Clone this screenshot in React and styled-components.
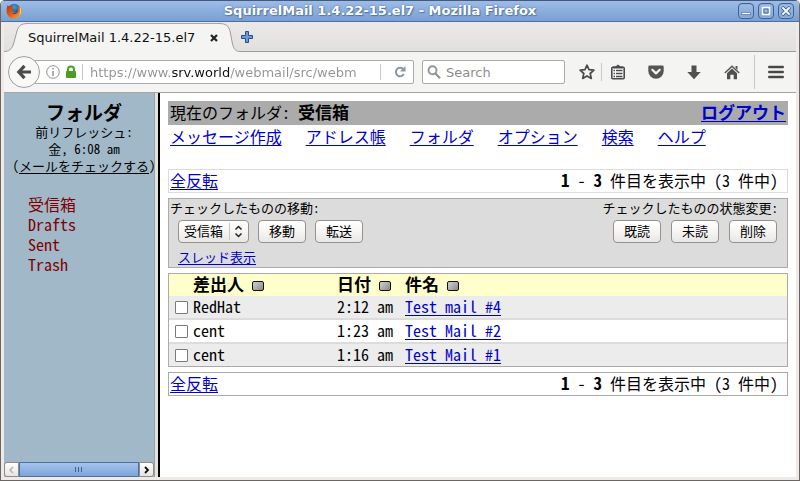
import React from "react";
import styled, { createGlobalStyle } from "styled-components";

const GlobalStyle = createGlobalStyle`
  *, *::before, *::after { box-sizing: border-box; }
  body { margin: 0; background: #fff; }
  button, input, select { font: inherit; color: inherit; margin: 0; }
`;

const chromeFont = `"DejaVu Sans", sans-serif`;
const pageFont = `"Noto Sans CJK JP", sans-serif`;

/* ---------- window frame ---------- */

const Frame = styled.div`
  display: flex;
  flex-direction: column;
  min-height: 100vh;
  background: #edeae8;
  border: 1px solid #6b6663;
  border-top: 0;
  border-radius: 5px 5px 0 0;
  overflow: hidden;
  font: 13px/16px ${chromeFont};
`;

const TitleBar = styled.header`
  display: grid;
  grid-template-columns: 24px 1fr 64px;
  align-items: center;
  height: 22px;
  padding: 0 5px;
  border-top: 1px solid #45597a;
  border-bottom: 1px solid #49709f;
  background: linear-gradient(#9dbce8, #7a9fd3);
`;

const WindowTitle = styled.h1`
  margin: 0;
  font-size: 13px;
  line-height: 20px;
  text-align: center;
  white-space: nowrap;
  color: #fff;
  text-shadow: 0 0 2px #45699c, 1px 1px 1px #5479ad;
`;

const WindowControls = styled.div`
  display: flex;
  justify-content: flex-end;
  gap: 4px;
`;

const WindowButton = styled.button`
  display: grid;
  place-items: center;
  width: 16px;
  height: 16px;
  padding: 0;
  border: 1px solid #41628f;
  border-radius: 4px;
  background: linear-gradient(#9dbce8, #7fa4d7);
  box-shadow: inset 0 0 0 1px #8fb1e0;
`;

const Body = styled.div`
  display: flex;
  flex: 1;
  flex-direction: column;
  margin: 0 3px 3px;
`;

/* ---------- tabs ---------- */

const TabStrip = styled.nav`
  display: flex;
  height: 30px;
  background: linear-gradient(#ebe9e8, #e2e0df);
`;

const Tab = styled.div`
  display: flex;
  align-items: center;
  gap: 14px;
  margin-top: 1px;
  padding: 0 0 1px;
  background: #f4f4f2;
  border-top: 1px solid #a3a6a8;
  color: #111;
  white-space: nowrap;
`;

const TabRest = styled.div`
  flex: 1;
  display: flex;
  align-items: center;
  border-bottom: 1px solid #9c9b99;
`;

const IconButton = styled.button`
  display: grid;
  place-items: center;
  flex: none;
  width: ${(p) => p.$width || 16}px;
  height: 16px;
  padding: 0;
  border: 0;
  background: none;
`;

/* ---------- toolbar ---------- */

const Toolbar = styled.div`
  display: flex;
  align-items: center;
  height: 41px;
  padding-left: 4px;
  background: #f4f4f2;
  border-bottom: 1px solid #a5a4a2;
`;

const BackButton = styled.button`
  display: grid;
  place-items: center;
  flex: none;
  z-index: 1;
  width: 32px;
  height: 32px;
  padding: 0;
  border: 1px solid #a09f9d;
  border-radius: 50%;
  background: #f8f8f7;
`;

const Field = styled.div`
  display: flex;
  align-items: center;
  height: 24px;
  border: 1px solid #acaba8;
  border-radius: 2px;
  background: #fff;
`;

const UrlField = styled(Field)`
  flex: 1;
  min-width: 0;
  margin-left: -6px;
  padding-left: 11px;
  gap: 5px;
`;

const SearchField = styled(Field)`
  width: 143px;
  margin-left: 8px;
  padding-left: 4px;
  gap: 5px;
`;

const TextInput = styled.input`
  flex: 1;
  min-width: 0;
  height: 20px;
  padding: 0;
  border: 0;
  outline: 0;
  background: none;
  color: #111;
  &::placeholder { color: #8c8c8c; opacity: 1; }
`;

const UrlInput = styled(TextInput)`
  padding-left: 2px;
  background: linear-gradient(to right, #929292 83px, #111 83px 142px, #929292 142px);
  -webkit-background-clip: text;
  background-clip: text;
  -webkit-text-fill-color: transparent;
`;

const Rule = styled.span`
  flex: none;
  width: 1px;
  height: ${(p) => p.$height}px;
  background: #c9c8c6;
`;

const Tools = styled.div`
  display: flex;
  align-items: center;
  margin-left: 8px;
`;

/* ---------- frames ---------- */

const Frames = styled.div`
  display: flex;
  flex: 1;
  font-family: ${pageFont};
  font-size: 16px;
  color: #000;
  font-feature-settings: "hwid";
`;

const Sidebar = styled.aside`
  display: flex;
  flex-direction: column;
  flex: none;
  width: 150px;
  overflow: hidden;
  background: #a1b8c8;
`;

const SidebarBody = styled.div`
  flex: 1;
  width: 160px;
  padding: 8px;
`;

const SidebarTitle = styled.h2`
  margin: 0;
  font-size: 19px;
  line-height: 22px;
  text-align: center;
`;

const Refresh = styled.p`
  margin: 0;
  font-size: 13px;
  line-height: 17px;
  text-align: center;
  white-space: nowrap;
`;

const FolderList = styled.ul`
  margin: 20px 0 0;
  padding: 0 0 0 16px;
  list-style: none;
  line-height: 20px;
`;

const FolderLink = styled.a`
  display: block;
  color: #800000;
  text-decoration: none;
`;

const Splitter = styled.div`
  flex: none;
  width: 6px;
  border-left: 1px solid #a09f9d;
  border-right: 2px solid #000;
  background: #e4e2e0;
`;

const ScrollBar = styled.div`
  display: flex;
  height: 15px;
  border-radius: 3px;
`;

const ScrollButton = styled.button`
  display: grid;
  place-items: center;
  width: 15px;
  padding: 0;
  border: 1px solid #8f8b88;
  border-radius: ${(p) => (p.$end ? "0 3px 3px 0" : "3px 0 0 3px")};
  background: linear-gradient(#fff, #e6e4e2);
`;

const ScrollThumb = styled.div`
  display: grid;
  place-items: center;
  flex: 1;
  border: 1px solid #4a719f;
  background: linear-gradient(#a4c3ee, #7ea5d8);
`;

const Link = styled.a`
  color: ${(p) => p.$color || "#0000cc"};
  text-decoration: underline;
  text-decoration-thickness: 1px;
  text-underline-offset: 2px;
  text-decoration-skip-ink: none;
`;

const Strong = styled.b`
  font-size: 17px;
`;

const Main = styled.main`
  flex: 1;
  min-width: 0;
  padding: 8px;
  background: #fff;
`;

const FolderBar = styled.div`
  display: flex;
  justify-content: space-between;
  padding: 0 2px 2px;
  line-height: 22px;
  background: #ababab;
`;

const Menu = styled.nav`
  display: flex;
  flex-wrap: wrap;
  gap: 0 24px;
  margin-bottom: 22px;
  padding: 0 2px;
  line-height: 22px;
`;

const CountBar = styled.div`
  display: flex;
  justify-content: space-between;
  padding: 0 9px 2px 1px;
  line-height: 20px;
  border: 1px solid ${(p) => p.$line};
`;

const Actions = styled.section`
  display: flex;
  justify-content: space-between;
  margin: 5px 0;
  padding: 0 9px 1px 1px;
  border: 1px solid #ababab;
  background: #dcdcdc;
  font-size: 13px;
`;

const ActionGroup = styled.div`
  display: flex;
  flex-direction: column;
  align-items: ${(p) => (p.$right ? "flex-end" : "flex-start")};
  line-height: 18px;
`;

const ButtonRow = styled.div`
  display: flex;
  gap: ${(p) => p.$gap}px;
  margin: 3px 0 5px;
  padding: ${(p) => (p.$right ? "0 1px 0 0" : "0 0 0 8px")};
`;

const Indent = styled.div`
  padding-left: 8px;
`;

const controlLook = `
  height: 23px;
  border: 1px solid #96918d;
  border-radius: 4px;
  background: linear-gradient(#fff, #f6f5f4 50%, #e9e7e5);
  font-size: 13px;
  line-height: 18px;
`;

const Button = styled.button`
  ${controlLook}
  width: 48px;
  padding: 0 0 2px;
`;

const SelectBox = styled.div`
  ${controlLook}
  display: grid;
  grid-template-columns: 50px 20px;
  align-items: center;
  width: 71px;
`;

const Select = styled.select`
  grid-area: 1 / 1 / 2 / 3;
  height: 21px;
  padding: 0 0 2px 5px;
  border: 0;
  appearance: none;
  background: none;
`;

const SelectArrows = styled.svg`
  grid-area: 1 / 2 / 2 / 3;
  pointer-events: none;
`;

const MessageTable = styled.table`
  width: 100%;
  margin-bottom: 5px;
  border: 1px solid #ababab;
  border-spacing: 0;
  table-layout: fixed;
  line-height: 20px;
  text-align: left;
  white-space: nowrap;
`;

const Column = styled.col`
  width: ${(p) => p.$width};
`;

const HeadCell = styled.th`
  padding: 0 0 2px;
  font-size: 17px;
  background: #ffffcc;
`;

const SortButton = styled.button`
  width: 12px;
  height: 10px;
  margin-left: 8px;
  padding: 0;
  border: 1px solid #111;
  border-radius: 2px;
  background: linear-gradient(135deg, #d2d2d2, #8a8a8a);
  vertical-align: 1px;
`;

const MessageRow = styled.tr`
  background: ${(p) => (p.$shade ? "#ececec" : "#fff")};
  &:not(:last-child) > td { border-bottom: 2px solid #dcdcdc; }
`;

const Cell = styled.td`
  padding: 0 0 2px;
`;

const CheckCell = styled.td`
  padding: 0 0 0 6px;
`;

const Check = styled.input`
  display: block;
  appearance: none;
  width: 13px;
  height: 13px;
  border: 1px solid #7d7976;
  border-radius: 1px;
  background: #fff;
`;

const folders = ["受信箱", "Drafts", "Sent", "Trash"];
const menu = ["メッセージ作成", "アドレス帳", "フォルダ", "オプション", "検索", "ヘルプ"];
const messages = [
  { from: "RedHat", time: "2:12 am", subject: "Test mail #4" },
  { from: "cent", time: "1:23 am", subject: "Test Mail #2" },
  { from: "cent", time: "1:16 am", subject: "Test Mail #1" },
];

/* ---------- icons ---------- */

const FirefoxLogo = () => (
  <svg width="16" height="16" viewBox="0 0 16 16" aria-hidden="true">
    <defs>
      <radialGradient id="globe" cx="50%" cy="25%" r="75%">
        <stop offset="0" stopColor="#3f9fd8" />
        <stop offset="1" stopColor="#122a66" />
      </radialGradient>
      <linearGradient id="fox" x1="0" y1="0" x2="1" y2="1">
        <stop offset="0" stopColor="#b5330e" />
        <stop offset=".5" stopColor="#e2601a" />
        <stop offset="1" stopColor="#f9b233" />
      </linearGradient>
    </defs>
    <circle cx="8.2" cy="7.2" r="6.4" fill="url(#globe)" />
    <path d="M1.8 2C2.200 2.900 2.800 3.200 3.600 3.200c1.200-.6 2-.4 2.800.2-.5.7.2 1.300 1.400 1.500-.2.900-1.600 1.200-1.900 2 .2 1.700 2 2.400 3.600 1.700-.6 1.400-2.200 2.100-3.600 1.600 2 1.800 5.500.8 6.200-2.100.4-2-.2-3.700-1.300-5 2.100.6 3 1.900 3.400 3 0-1-.3-1.900-.7-2.600C15.200 5 15.900 6.600 15.600 8.800c-.5 3.900-3.800 6.700-7.700 6.700C3.700 15.500.6 12.200.6 8.200.6 5.700 1 3.600 1.800 2z" fill="url(#fox)" />
    <path d="M13.500 3.200c2.200 2.600 2.400 6.800-.2 9.300 1-2.800 1.200-6 .2-9.300z" fill="#fde06a" />
  </svg>
);

const TabEdge = ({ right }) => {
  const curve = right
    ? "M0 1.500C7 1.500 9.500 4 11 9L13.500 22C15 27.500 17 29.500 21 29.500"
    : "M0 29.500C5 29.500 7.500 27.500 9.500 22L13 9C14.500 4 17 1.500 24 1.500";
  const width = right ? 21 : 24;
  return (
    <svg width={width} height="30" viewBox={`0 0 ${width} 30`} aria-hidden="true">
      <path d={right ? `${curve}V30H0z` : `${curve}V30H0z`} fill="#f4f4f2" />
      <path d={curve} fill="none" stroke="#9c9b99" />
    </svg>
  );
};

const PlusIcon = () => (
  <svg width="12" height="12" viewBox="0 0 12 12" aria-hidden="true">
    <path d="M4.500.5h3v4h4v3h-4v4h-3v-4h-4v-3h4z" fill="#6b9bd2" stroke="#264f86" strokeLinejoin="round" />
  </svg>
);

const CloseIcon = () => (
  <svg width="8" height="8" viewBox="0 0 8 8" aria-hidden="true">
    <path d="M1 1l6 6M7 1L1 7" stroke="#222" strokeWidth="2.200" />
  </svg>
);

const BackIcon = () => (
  <svg width="16" height="16" viewBox="0 0 16 16" aria-hidden="true">
    <path d="M8.500 1.800L2.800 8l5.700 6.200M3 8h12" fill="none" stroke="#4c4c4c" strokeWidth="3.200" />
  </svg>
);

const InfoIcon = () => (
  <svg width="14" height="14" viewBox="0 0 14 14" aria-hidden="true">
    <circle cx="7" cy="7" r="6.300" fill="#fff" stroke="#8f8f8f" />
    <path d="M7 6v5M7 3v1.600" stroke="#8f8f8f" strokeWidth="1.500" />
  </svg>
);

const LockIcon = () => (
  <svg width="12" height="14" viewBox="0 0 12 14" aria-hidden="true">
    <path d="M3 7V4.500a3 3 0 016 0V7" fill="none" stroke="#4b9e23" strokeWidth="2" />
    <rect x="1" y="6" width="10" height="7" rx="1" fill="#4b9e23" />
  </svg>
);

const ReloadIcon = () => (
  <svg width="12" height="12" viewBox="0 0 12 12" aria-hidden="true">
    <path d="M9 3A4.200 4.200 0 109.800 8" fill="none" stroke="#8c96a3" strokeWidth="2" />
    <path d="M11.500 0v5.500H6z" fill="#8c96a3" />
  </svg>
);

const SearchIcon = () => (
  <svg width="14" height="14" viewBox="0 0 14 14" aria-hidden="true">
    <circle cx="5.500" cy="5.300" r="4" fill="none" stroke="#949494" strokeWidth="1.900" />
    <path d="M8.500 8.500l4.500 4.700" stroke="#949494" strokeWidth="2.200" />
  </svg>
);

const StarIcon = () => (
  <svg width="16" height="16" viewBox="0 0 16 16" aria-hidden="true">
    <path d="M8 1.200l2 4.500 4.900.5-3.700 3.300 1.100 4.900L8 11.900l-4.300 2.500 1.100-4.900L1.100 6.200 6 5.700z" fill="none" stroke="#4a4a4a" strokeWidth="1.700" strokeLinejoin="round" />
  </svg>
);

const ClipboardIcon = () => (
  <svg width="16" height="16" viewBox="0 0 16 16" aria-hidden="true">
    <path d="M5 3L8 .5 11 3z" fill="#4a4a4a" />
    <rect x="1.800" y="3.300" width="12.400" height="11.400" rx="1" fill="#fff" stroke="#4a4a4a" strokeWidth="1.600" />
    <path d="M3.500 6.500h1.500M6 6.500h6.500M3.500 9.500h1.500M6 9.500h6.500M3.500 12.500h1.500M6 12.500h6.500" stroke="#4a4a4a" strokeWidth="1.300" />
    <path d="M3 3.500h10" stroke="#4a4a4a" strokeWidth="2" />
  </svg>
);

const PocketIcon = () => (
  <svg width="16" height="14" viewBox="0 0 16 14" aria-hidden="true">
    <path d="M1.500.5h13a1.200 1.200 0 011.200 1.200V6a7.700 7.700 0 01-15.400 0V1.700A1.200 1.200 0 011.500.5z" fill="#555" />
    <path d="M4.300 4.800L8 8.400l3.700-3.600" fill="none" stroke="#f4f4f2" strokeWidth="2.200" strokeLinecap="round" strokeLinejoin="round" />
  </svg>
);

const DownloadIcon = () => (
  <svg width="14" height="15" viewBox="0 0 14 15" aria-hidden="true">
    <path d="M4.500.5h5v6.500h4.200L7 14.200.3 7h4.200z" fill="#505050" />
  </svg>
);

const HomeIcon = () => (
  <svg width="16" height="15" viewBox="0 0 16 15" aria-hidden="true">
    <path d="M.8 8L8 1.200 15.200 8" fill="none" stroke="#555" strokeWidth="1.500" />
    <path d="M11.500 1h2v4l-2-2z" fill="#555" />
    <path d="M3 8.200l5-4.700 5 4.700v6H9.700v-4.500H6.300v4.500H3z" fill="#505050" />
  </svg>
);

const MenuIcon = () => (
  <svg width="16" height="14" viewBox="0 0 16 14" aria-hidden="true">
    <path d="M1.300 2h13.400M1.300 7h13.400M1.300 12h13.400" stroke="#484848" strokeWidth="2.600" strokeLinecap="round" />
  </svg>
);

function Count({ line }) {
  return (
    <CountBar $line={line}>
      <Link href="#toggle">全反転</Link>
      <span><Strong>1</Strong> - <Strong>3</Strong> 件目を表示中 (3 件中)</span>
    </CountBar>
  );
}

export default function App() {
  return (
    <Frame>
      <GlobalStyle />
      <TitleBar>
        <FirefoxLogo />
        <WindowTitle>SquirrelMail 1.4.22-15.el7 - Mozilla Firefox</WindowTitle>
        <WindowControls>
          <WindowButton aria-label="最小化">
            <svg width="10" height="10" viewBox="0 0 10 10"><path d="M.5 6.500h9v2h-9z" fill="#fff" stroke="#41628f" strokeWidth=".6" /></svg>
          </WindowButton>
          <WindowButton aria-label="最大化">
            <svg width="10" height="10" viewBox="0 0 10 10"><path d="M1.500 1.500h7v7h-7z" fill="none" stroke="#fff" strokeWidth="1.400" /><path d="M3 3h4v4H3z" fill="#9dbce8" stroke="#41628f" strokeWidth=".8" /></svg>
          </WindowButton>
          <WindowButton aria-label="閉じる">
            <svg width="10" height="10" viewBox="0 0 10 10"><path d="M1 1l8 8M9 1L1 9" stroke="#41628f" strokeWidth="3.600" /><path d="M1.400 1.400l7.200 7.200M8.600 1.400L1.400 8.600" stroke="#fff" strokeWidth="2" /></svg>
          </WindowButton>
        </WindowControls>
      </TitleBar>
      <Body>
        <TabStrip>
          <TabEdge />
          <Tab>
            <span>SquirrelMail 1.4.22-15.el7</span>
            <IconButton $width={10} aria-label="タブを閉じる"><CloseIcon /></IconButton>
          </Tab>
          <TabEdge right />
          <TabRest>
            <IconButton $width={14} aria-label="新しいタブ"><PlusIcon /></IconButton>
          </TabRest>
        </TabStrip>
        <Toolbar>
          <BackButton aria-label="戻る"><BackIcon /></BackButton>
          <UrlField>
            <InfoIcon />
            <LockIcon />
            <Rule $height={16} />
            <UrlInput aria-label="URL" defaultValue="https://www.srv.world/webmail/src/webm" />
            <Rule $height={16} />
            <IconButton $width={27} aria-label="再読み込み"><ReloadIcon /></IconButton>
          </UrlField>
          <SearchField>
            <SearchIcon />
            <TextInput aria-label="Search" placeholder="Search" />
          </SearchField>
          <Tools>
            <IconButton $width={28} aria-label="ブックマーク"><StarIcon /></IconButton>
            <Rule $height={18} />
            <IconButton $width={32} aria-label="ブックマーク一覧"><ClipboardIcon /></IconButton>
            <IconButton $width={44} aria-label="Pocket"><PocketIcon /></IconButton>
            <IconButton $width={32} aria-label="ダウンロード"><DownloadIcon /></IconButton>
            <IconButton $width={44} aria-label="ホーム"><HomeIcon /></IconButton>
            <Rule $height={34} />
            <IconButton $width={41} aria-label="メニュー"><MenuIcon /></IconButton>
          </Tools>
        </Toolbar>

        <Frames lang="ja">
          <Sidebar>
            <SidebarBody>
              <SidebarTitle>フォルダ</SidebarTitle>
              <Refresh>前リフレッシュ:<br />金, 6:08 am<br />(<Link href="#check" $color="#000">メールをチェックする</Link>)</Refresh>
              <FolderList>
                {folders.map((name) => (
                  <li key={name}><FolderLink href={`#${name}`}>{name}</FolderLink></li>
                ))}
              </FolderList>
            </SidebarBody>
            <ScrollBar>
              <ScrollButton aria-label="左へ">
                <svg width="7" height="8" viewBox="0 0 7 8"><path d="M5 1L2 4l3 3" fill="none" stroke="#b5b2af" strokeWidth="1.500" /></svg>
              </ScrollButton>
              <ScrollThumb>
                <svg width="8" height="5" viewBox="0 0 8 5"><path d="M.5 0v5M3.500 0v5M6.500 0v5" stroke="#3c6294" /></svg>
              </ScrollThumb>
              <ScrollButton $end aria-label="右へ">
                <svg width="7" height="8" viewBox="0 0 7 8"><path d="M2 1l3 3-3 3" fill="none" stroke="#111" strokeWidth="1.800" /></svg>
              </ScrollButton>
            </ScrollBar>
          </Sidebar>
          <Splitter />
          <Main>
            <FolderBar>
              <span>現在のフォルダ: <Strong>受信箱</Strong></span>
              <Strong><Link href="#logout">ログアウト</Link></Strong>
            </FolderBar>
            <Menu>
              {menu.map((label) => <Link key={label} href={`#${label}`}>{label}</Link>)}
            </Menu>
            <Count line="#dcdcdc" />
            <Actions>
              <ActionGroup>
                <label htmlFor="target">チェックしたものの移動:</label>
                <ButtonRow $gap={9}>
                  <SelectBox>
                    <Select id="target" defaultValue="受信箱">
                      {folders.map((name) => <option key={name}>{name}</option>)}
                    </Select>
                    <SelectArrows width="20" height="19" viewBox="0 0 20 19">
                      <path d="M.5 1v17" stroke="#c9c6c3" />
                      <path d="M6.500 7.500l3-3 3 3M6.500 11.500l3 3 3-3" fill="none" stroke="#222" strokeWidth="1.500" />
                    </SelectArrows>
                  </SelectBox>
                  <Button>移動</Button>
                  <Button>転送</Button>
                </ButtonRow>
                <Indent><Link href="#thread">スレッド表示</Link></Indent>
              </ActionGroup>
              <ActionGroup $right>
                <span>チェックしたものの状態変更:</span>
                <ButtonRow $gap={10} $right>
                  <Button>既読</Button>
                  <Button>未読</Button>
                  <Button>削除</Button>
                </ButtonRow>
              </ActionGroup>
            </Actions>
            <MessageTable>
              <colgroup>
                <Column $width="24px" />
                <Column $width="144px" />
                <Column $width="68px" />
                <Column $width="auto" />
              </colgroup>
              <thead>
                <tr>
                  <HeadCell />
                  {["差出人", "日付", "件名"].map((label) => (
                    <HeadCell key={label} scope="col">{label}<SortButton aria-label={`${label}で並べ替え`} /></HeadCell>
                  ))}
                </tr>
              </thead>
              <tbody>
                {messages.map((m, i) => (
                  <MessageRow key={m.subject} $shade={i % 2 === 0}>
                    <CheckCell><Check type="checkbox" aria-label={m.subject} /></CheckCell>
                    <Cell>{m.from}</Cell>
                    <Cell>{m.time}</Cell>
                    <Cell><Link href={`#message-${i}`}>{m.subject}</Link></Cell>
                  </MessageRow>
                ))}
              </tbody>
            </MessageTable>
            <Count line="#ababab" />
          </Main>
        </Frames>
      </Body>
    </Frame>
  );
}
